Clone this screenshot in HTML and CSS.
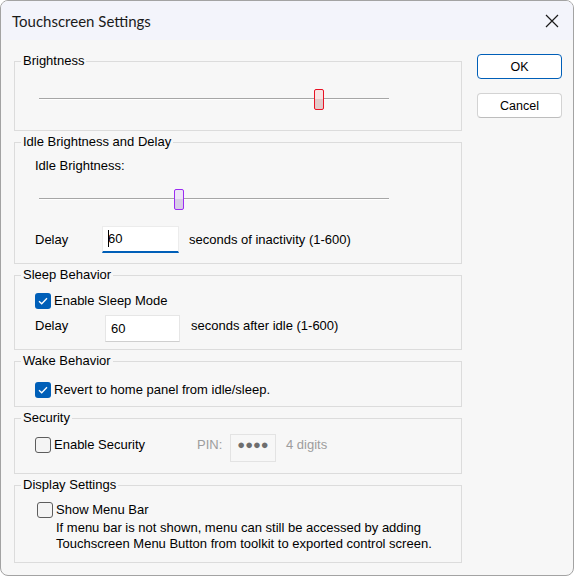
FILE: index.html
```html
<!DOCTYPE html>
<html lang="en">
<head>
    <meta charset="UTF-8">
    <meta name="viewport" content="width=device-width, initial-scale=1.0">
    <title>Touchscreen Settings</title>
    <link rel="stylesheet" href="styles.css">
</head>
<body>
    <div class="window">
        <div class="titlebar">
            <span class="title">Touchscreen Settings</span>
            <svg class="close" width="14" height="14" viewBox="0 0 14 14">
                <path d="M1 1 L13 13 M13 1 L1 13" stroke="#1a1a1a" stroke-width="1.2" fill="none"/>
            </svg>
        </div>

        <div class="dialog">
            <div class="groups">
                <fieldset class="group group-brightness">
                    <legend>Brightness</legend>
                    <div class="slider slider-top">
                        <div class="track"></div>
                        <div class="thumb thumb-red" style="left: 80%"></div>
                    </div>
                </fieldset>

                <fieldset class="group group-idle">
                    <legend>Idle Brightness and Delay</legend>
                    <div class="row caption">Idle Brightness:</div>
                    <div class="slider">
                        <div class="track"></div>
                        <div class="thumb thumb-purple" style="left: 40%"></div>
                    </div>
                    <div class="row field-row idle-delay">
                        <span class="field-label">Delay</span>
                        <div class="textbox textbox-focus"><span class="caret"></span>60</div>
                        <span>seconds of inactivity (1-600)</span>
                    </div>
                </fieldset>

                <fieldset class="group group-sleep">
                    <legend>Sleep Behavior</legend>
                    <label class="row check">
                        <span class="box checked">
                            <svg width="10" height="8" viewBox="0 0 10 8"><path d="M1 4.2 L3.7 6.8 L9 1.2" stroke="#fff" stroke-width="1.3" fill="none"/></svg>
                        </span>
                        Enable Sleep Mode
                    </label>
                    <div class="row field-row sleep-delay">
                        <span class="field-label">Delay</span>
                        <div class="textbox">60</div>
                        <span class="field-hint">seconds after idle (1-600)</span>
                    </div>
                </fieldset>

                <fieldset class="group group-wake">
                    <legend>Wake Behavior</legend>
                    <label class="row check">
                        <span class="box checked">
                            <svg width="10" height="8" viewBox="0 0 10 8"><path d="M1 4.2 L3.7 6.8 L9 1.2" stroke="#fff" stroke-width="1.3" fill="none"/></svg>
                        </span>
                        Revert to home panel from idle/sleep.
                    </label>
                </fieldset>

                <fieldset class="group group-security">
                    <legend>Security</legend>
                    <div class="row security-row">
                        <label class="check security-check">
                            <span class="box"></span>
                            Enable Security
                        </label>
                        <span class="muted pin-label">PIN:</span>
                        <div class="pin-box">&#9679;&#9679;&#9679;&#9679;</div>
                        <span class="muted">4 digits</span>
                    </div>
                </fieldset>

                <fieldset class="group group-display">
                    <legend>Display Settings</legend>
                    <label class="row check menu-check">
                        <span class="box"></span>
                        Show Menu Bar
                    </label>
                    <p class="note">If menu bar is not shown, menu can still be accessed by adding<br>Touchscreen Menu Button from toolkit to exported control screen.</p>
                </fieldset>
            </div>

            <div class="actions">
                <button type="button" class="btn btn-default">OK</button>
                <button type="button" class="btn">Cancel</button>
            </div>
        </div>
    </div>
</body>
</html>
```

FILE: styles.css
```css
body {
    margin: 0;
    background-color: #ffffff;
    font-family: "Liberation Sans", Arial, sans-serif;
    font-size: 13px;
    color: #000;
}
.window {
    width: 574px;
    height: 576px;
    box-sizing: border-box;
    border: 1px solid #a3a3a3;
    border-radius: 8px;
    background-color: #f7f7f7;
    overflow: hidden;
}
.titlebar {
    height: 39px;
    display: flex;
    align-items: center;
    justify-content: space-between;
    padding: 0 14px 0 11px;
    background-color: #f3f4fb;
}
.title {
    font-family: Lato, "Open Sans", sans-serif;
    font-size: 15px;
    color: #1a1a1a;
    margin-top: 1px;
}
.dialog {
    display: flex;
    padding: 13px 0 0 13px;
}
.groups {
    width: 448px;
    display: flex;
    flex-direction: column;
    gap: 3px;
}
.actions {
    display: flex;
    flex-direction: column;
    gap: 14px;
    margin-top: 1px;
    margin-left: 15px;
}

/* group boxes */
.group {
    margin: 0;
    padding: 0 0 0 6px;
    min-width: 0;
    border: 1px solid #dcdcdc;
    box-sizing: border-box;
}
.group legend {
    padding: 0 2px;
    line-height: 16px;
}
.group-brightness { height: 78px; }
.group-idle { height: 130px; }
.group-sleep { height: 83px; }
.group-wake { height: 54px; }
.group-security { height: 64px; }
.group-display { height: 86px; }

.row {
    margin-left: 14px;
    line-height: 16px;
}
.caption {
    margin-top: 8px;
}

/* trackbar */
.slider {
    position: relative;
    width: 350px;
    height: 21px;
    margin: 15px 0 0 18px;
}
.slider-top {
    margin-top: 20px;
}
.track {
    position: absolute;
    left: 0;
    right: 0;
    top: 9px;
    height: 1px;
    background-color: #a6a6a6;
    border-bottom: 1px solid #ffffff;
}
.thumb {
    position: absolute;
    top: 0;
    width: 10px;
    height: 21px;
    margin-left: -5px;
    box-sizing: border-box;
    border-radius: 2px;
}
.thumb-red {
    border: 1.5px solid #e81224;
    background: linear-gradient(#f8e4e4 50%, #e2caca 50%);
}
.thumb-purple {
    border: 1.5px solid #9b2cf2;
    background: linear-gradient(#ede4f6 50%, #d8cce6 50%);
}

/* text fields */
.field-row {
    display: flex;
    align-items: center;
}
.idle-delay {
    margin-top: 16px;
}
.idle-delay .field-label {
    width: 67px;
}
.sleep-delay {
    align-items: flex-start;
    margin-top: 6px;
}
.sleep-delay .field-label {
    width: 70px;
    margin-top: 3px;
}
.field-hint {
    margin-top: 3px;
}
.textbox {
    width: 75px;
    height: 27px;
    box-sizing: border-box;
    background-color: #ffffff;
    border: 1px solid #e6e6e6;
    border-bottom-color: #cfcfcf;
    padding-left: 5px;
    line-height: 25px;
    margin-right: 11px;
}
.textbox-focus {
    width: 77px;
    border-color: #ececec;
    border-bottom: 2px solid #005fb8;
    line-height: 24px;
    margin-right: 10px;
}
.caret {
    display: inline-block;
    width: 1px;
    height: 17px;
    background-color: #000;
    vertical-align: -4px;
    margin-right: -1px;
}

/* checkboxes */
.check {
    display: flex;
    align-items: center;
    gap: 3px;
}
.group-sleep .check {
    margin-top: 10px;
}
.group-wake .check {
    margin-top: 13px;
}
.box {
    width: 16px;
    height: 16px;
    box-sizing: border-box;
    border: 1px solid #5d5d5d;
    border-radius: 3px;
    background-color: #f4f4f4;
    display: flex;
    align-items: center;
    justify-content: center;
}
.box.checked {
    border: none;
    background-color: #005fb8;
}

/* security */
.security-row {
    display: flex;
    align-items: flex-start;
    margin-top: 8px;
}
.security-check {
    width: 162px;
    margin-top: 3px;
}
.muted {
    color: #9d9d9d;
    margin-top: 3px;
}
.pin-label {
    width: 33px;
}
.pin-box {
    width: 46px;
    height: 28px;
    box-sizing: border-box;
    border: 1px solid #e3e3e3;
    padding-top: 2px;
    text-align: center;
    color: #6e6e6e;
    font-size: 13px;
    line-height: 16px;
    margin-right: 10px;
}

/* display settings */
.menu-check {
    margin-top: 9px;
    margin-left: 16px;
}
.note {
    margin: 2px 0 0 35px;
    line-height: 16px;
}

/* buttons */
.btn {
    width: 85px;
    height: 25px;
    box-sizing: border-box;
    background-color: #ffffff;
    border: 1px solid #d3d3d3;
    border-bottom-color: #bdbdbd;
    border-radius: 4px;
    font-family: "Liberation Sans", Arial, sans-serif;
    font-size: 12.5px;
    color: #000;
    padding: 0;
}
.btn-default {
    border: 1.5px solid #005fb8;
}
```
